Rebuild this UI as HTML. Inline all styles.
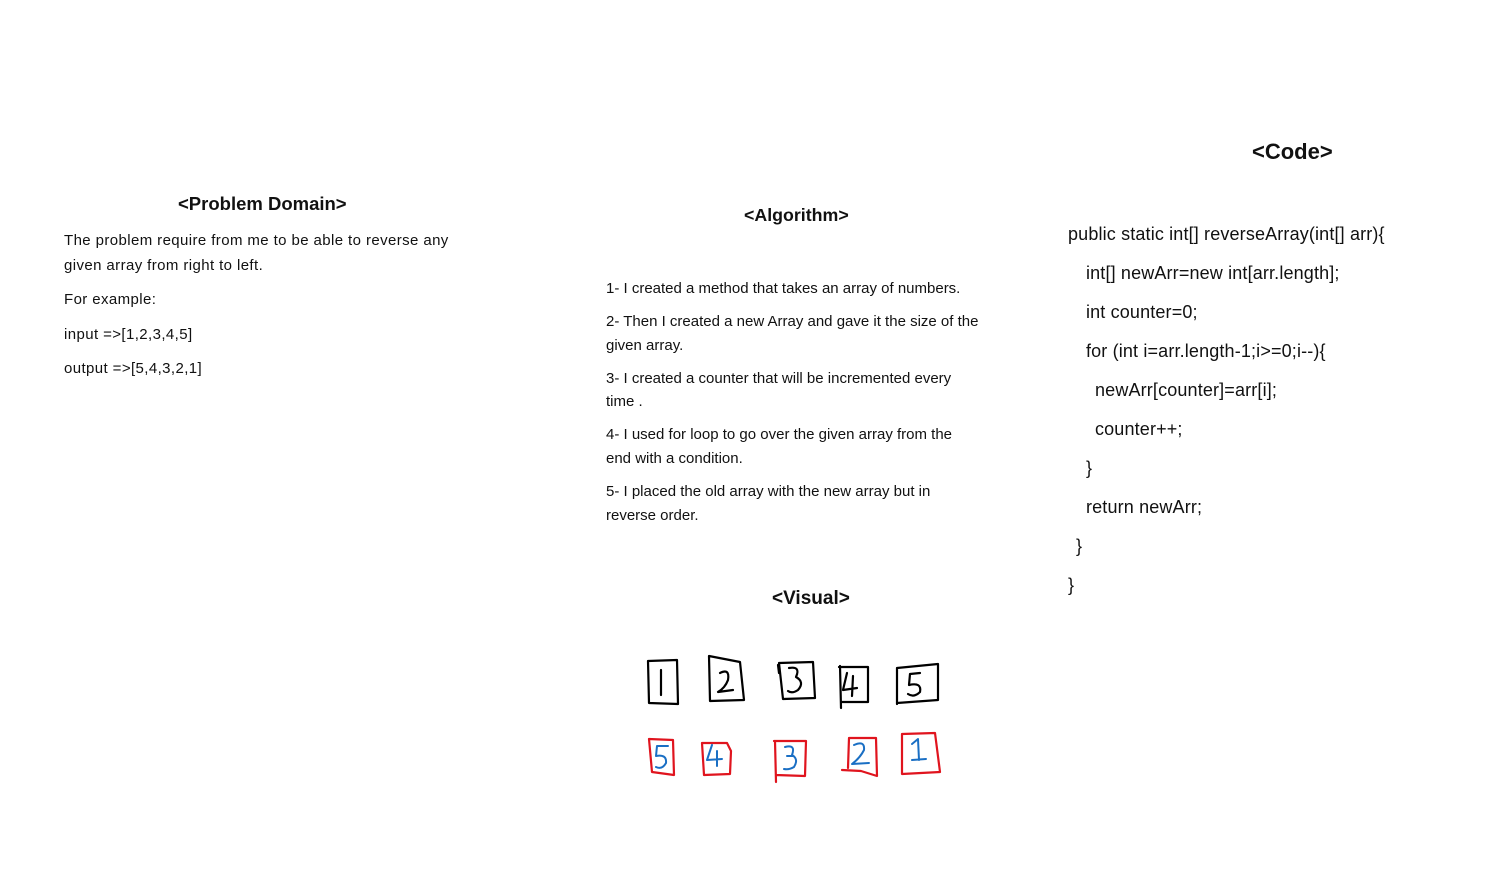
<!DOCTYPE html>
<html><head><meta charset="utf-8"><style>
body{margin:0;width:1503px;height:877px;background:#fff;position:relative;overflow:hidden;font-family:"Liberation Sans",sans-serif;color:#111}
.t{position:absolute;white-space:nowrap;font-size:15px;line-height:20px}
.p{letter-spacing:0.4px}
.h{position:absolute;white-space:nowrap;font-weight:bold;font-size:18.5px;line-height:20px}
.c{position:absolute;white-space:nowrap;font-size:18px;line-height:18px;letter-spacing:0.15px}
</style></head><body>
<div class="h" style="left:178px;top:194px">&lt;Problem Domain&gt;</div>
<div class="t p" style="left:64px;top:231px">The problem require from me to be able to reverse any</div>
<div class="t p" style="left:64px;top:256px">given array from right to left.</div>
<div class="t p" style="left:64px;top:290px">For example:</div>
<div class="t p" style="left:64px;top:325px">input =&gt;[1,2,3,4,5]</div>
<div class="t p" style="left:64px;top:359px">output =&gt;[5,4,3,2,1]</div>

<div class="h" style="left:744px;top:205px;font-size:17.8px">&lt;Algorithm&gt;</div>
<div class="t" style="left:606px;top:279px">1- I created a method that takes an array of numbers.</div>
<div class="t" style="left:606px;top:312px">2- Then I created a new Array and gave it the size of the</div>
<div class="t" style="left:606px;top:336px">given array.</div>
<div class="t" style="left:606px;top:369px">3- I created a counter that will be incremented every</div>
<div class="t" style="left:606px;top:392px">time .</div>
<div class="t" style="left:606px;top:425px">4- I used for loop to go over the given array from the</div>
<div class="t" style="left:606px;top:449px">end with a condition.</div>
<div class="t" style="left:606px;top:482px">5- I placed the old array with the new array but in</div>
<div class="t" style="left:606px;top:506px">reverse order.</div>

<div class="h" style="left:772px;top:589px;font-size:19px">&lt;Visual&gt;</div>

<div class="h" style="left:1252px;top:140px;font-size:22px;line-height:24px">&lt;Code&gt;</div>
<div class="c" style="left:1068px;top:225px">public static int[] reverseArray(int[] arr){</div>
<div class="c" style="left:1086px;top:264px">int[] newArr=new int[arr.length];</div>
<div class="c" style="left:1086px;top:303px">int counter=0;</div>
<div class="c" style="left:1086px;top:342px">for (int i=arr.length-1;i&gt;=0;i--){</div>
<div class="c" style="left:1095px;top:381px">newArr[counter]=arr[i];</div>
<div class="c" style="left:1095px;top:420px">counter++;</div>
<div class="c" style="left:1086px;top:459px">}</div>
<div class="c" style="left:1086px;top:498px">return newArr;</div>
<div class="c" style="left:1076px;top:537px">}</div>
<div class="c" style="left:1068px;top:576px">}</div>

<svg style="position:absolute;left:0;top:0" width="1503" height="877" fill="none" stroke-width="2.2" stroke-linecap="round" stroke-linejoin="round">
<g stroke="#000">
<path d="M648 661 L677 660 L678 704 L649 703 Z"/><path d="M661 670 L661 695"/>
<path d="M709 656 L740 662 L744 700 L710 701 Z"/><path d="M720 673 Q730 668 728 680 Q725 688 718 692 L733 690"/>
<path d="M779 663 L813 662 L815 698 L783 699 Z M778 665 L779 673"/><path d="M789 668 Q801 666 796 677 Q805 682 798 690 Q792 694 788 691"/>
<path d="M839 667 L868 667 L868 702 L841 702 M840 666 L841 708"/><path d="M847 673 L843 690 L857 688 M853 676 L852 696"/>
<path d="M897 668 L938 664 L938 700 L897 703 M897 668 L897 704"/><path d="M920 673 L910 674 L909 685 Q922 682 920 692 Q914 698 908 694"/>
</g>
<g stroke="#e0141e">
<path d="M649 739 L673 740 L674 775 L652 772 Z"/>
<path d="M702 743 L727 743 L731 751 L730 774 L704 775 Z"/>
<path d="M774 741 L806 741 L805 776 L776 775 M775 741 L776 782"/>
<path d="M849 738 L876 738 L877 776 L861 771 L842 770 M849 738 L848 768"/>
<path d="M902 734 L935 733 L940 772 L902 774 Z"/>
</g>
<g stroke="#1a6fc4" stroke-width="2">
<path d="M668 746 L657 746 L656 756 Q667 754 666 763 Q662 770 656 767"/>
<path d="M712 745 L707 760 L722 759 M717 751 L717 766"/>
<path d="M785 747 Q796 744 792 755 Q799 759 794 767 Q789 770 784 769 M787 756 L793 756"/>
<path d="M854 745 Q865 740 864 750 Q860 758 852 764 L869 763"/>
<path d="M912 744 L918 739 L919 760 M912 760 L926 759"/>
</g>
</svg>
</body></html>
